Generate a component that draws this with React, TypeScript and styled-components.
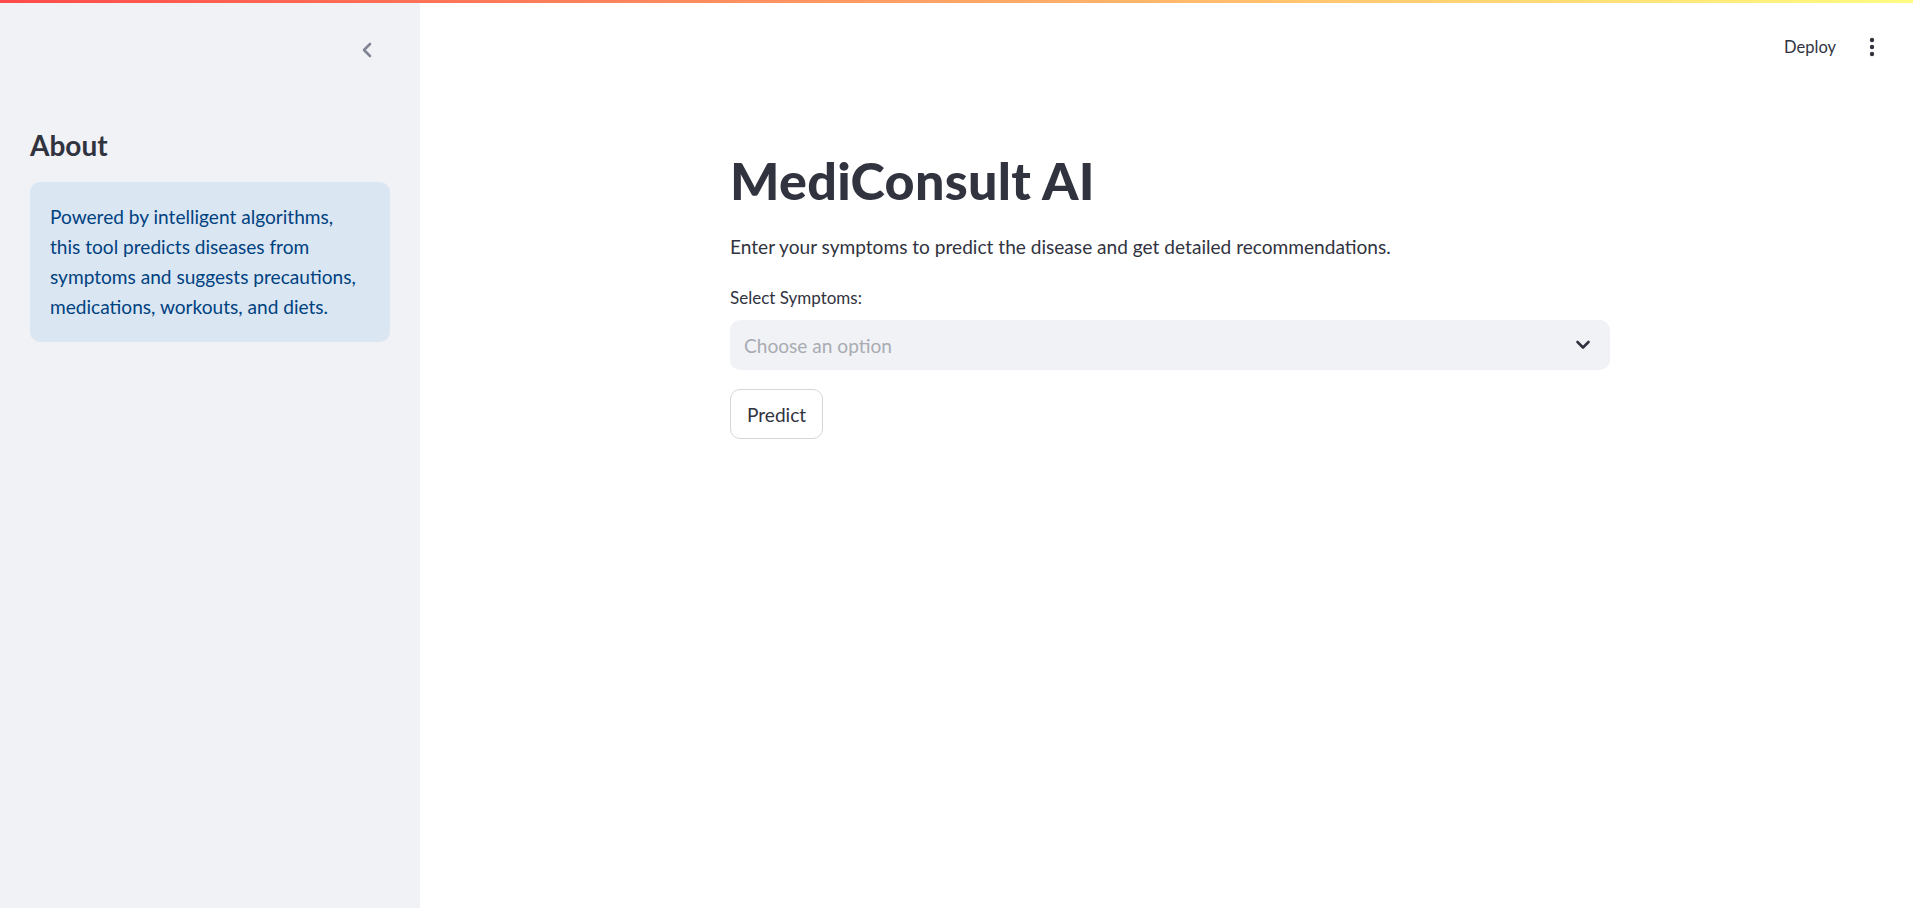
import React from "react";
import styled, { createGlobalStyle } from "styled-components";

const Global = createGlobalStyle`
  html, body { margin: 0; padding: 0; background: #ffffff; }
  body { font-family: Lato, "Noto Sans", sans-serif; color: #31333f; }
  * { box-sizing: border-box; }
`;

const Page = styled.div`
  display: flex;
  flex-direction: column;
  width: 100%;
  height: 908px;
  overflow: hidden;
`;

const Decoration = styled.div`
  height: 3px;
  flex: none;
  background: linear-gradient(90deg, #ff4b4b, #fffd80);
`;

const Body = styled.div`
  display: flex;
  flex: 1;
  min-height: 0;
`;

const Sidebar = styled.aside`
  width: 420px;
  flex: none;
  background: #f0f2f6;
  display: flex;
  flex-direction: column;
  padding: 0 30px;
`;

const SidebarTop = styled.div`
  height: 122px;
  display: flex;
  justify-content: flex-end;
  align-items: flex-start;
  padding-top: 39px;
  padding-right: 17px;
`;

const IconButton = styled.button`
  border: none;
  background: transparent;
  padding: 0;
  display: flex;
  align-items: center;
  justify-content: center;
  cursor: pointer;
`;

const SideHeading = styled.h2`
  margin: 0;
  font-size: 28px;
  font-weight: 700;
  line-height: 40px;
  color: #31333f;
`;

const InfoBox = styled.div`
  margin-top: 17px;
  background: #dbe6f3;
  border-radius: 10px;
  padding: 20px 26px 20px 20px;
  color: #004280;
  font-size: 19.1px;
  line-height: 30px;
`;

const Main = styled.main`
  flex: 1;
  display: flex;
  flex-direction: column;
  padding-left: 7px;
`;

const Header = styled.header`
  height: 88px;
  display: flex;
  justify-content: flex-end;
  align-items: center;
  gap: 33px;
  padding-right: 38px;
`;

const HeaderText = styled.span`
  font-size: 16.5px;
  color: #31333f;
`;

const Block = styled.div`
  width: 880px;
  margin: 0 auto;
  padding-top: 54px;
  display: flex;
  flex-direction: column;
`;

const Title = styled.h1`
  margin: 0;
  font-size: 52px;
  font-weight: 900;
  line-height: 70px;
  color: #31333f;
  letter-spacing: 0.3px;
`;

const Lead = styled.p`
  margin: 17px 0 0;
  font-size: 19.1px;
  line-height: 30px;
`;

const Label = styled.label`
  margin-top: 25px;
  font-size: 17px;
  line-height: 22px;
`;

const Select = styled.div`
  margin-top: 11px;
  height: 50px;
  background: #f0f2f6;
  border-radius: 10px;
  display: flex;
  align-items: center;
  justify-content: space-between;
  padding: 0 19px 0 14px;
`;

const Placeholder = styled.span`
  font-size: 19.1px;
  color: #a9abb2;
`;

const Button = styled.button`
  margin-top: 19px;
  align-self: flex-start;
  height: 50px;
  padding: 0 16px;
  border: 1px solid #d5d6d9;
  border-radius: 10px;
  background: #ffffff;
  font-family: inherit;
  font-size: 19.1px;
  color: #31333f;
`;

export default function App() {
  return (
    <Page>
      <Global />
      <Decoration />
      <Body>
        <Sidebar>
          <SidebarTop>
            <IconButton aria-label="Collapse sidebar">
              <svg width="12" height="16" viewBox="0 0 12 16">
                <path d="M9 2 L3 8 L9 14" fill="none" stroke="#808495" strokeWidth="2.6" strokeLinecap="round" strokeLinejoin="round" />
              </svg>
            </IconButton>
          </SidebarTop>
          <SideHeading>About</SideHeading>
          <InfoBox>
            Powered by intelligent algorithms, this tool predicts diseases from symptoms and suggests precautions, medications, workouts, and diets.
          </InfoBox>
        </Sidebar>
        <Main>
          <Header>
            <HeaderText>Deploy</HeaderText>
            <IconButton aria-label="Main menu">
              <svg width="6" height="20" viewBox="0 0 6 20">
                <circle cx="3" cy="3" r="2.2" fill="#31333f" />
                <circle cx="3" cy="10" r="2.2" fill="#31333f" />
                <circle cx="3" cy="17" r="2.2" fill="#31333f" />
              </svg>
            </IconButton>
          </Header>
          <Block>
            <Title>MediConsult AI</Title>
            <Lead>Enter your symptoms to predict the disease and get detailed recommendations.</Lead>
            <Label>Select Symptoms:</Label>
            <Select>
              <Placeholder>Choose an option</Placeholder>
              <svg width="16" height="10" viewBox="0 0 16 10">
                <path d="M2.5 2 L8 7.5 L13.5 2" fill="none" stroke="#31333f" strokeWidth="2.6" strokeLinecap="round" strokeLinejoin="round" />
              </svg>
            </Select>
            <Button>Predict</Button>
          </Block>
        </Main>
      </Body>
    </Page>
  );
}
